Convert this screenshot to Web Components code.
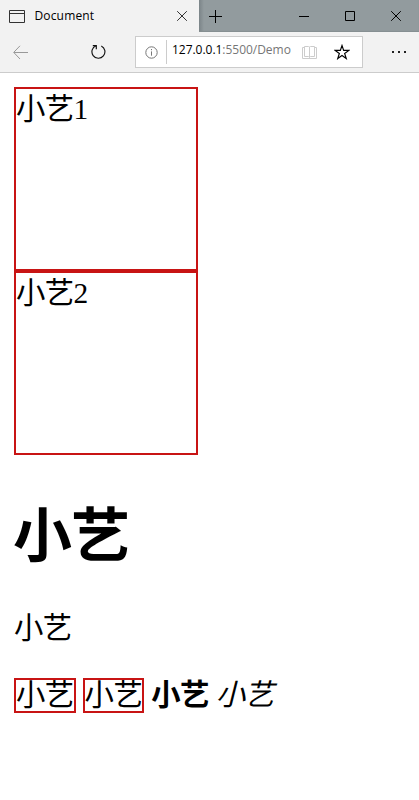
<!DOCTYPE html>
<html lang="zh">
<head>
<meta charset="utf-8">
<title>Document</title>
<style>
html,body{margin:0;background:#fff;height:100%;overflow:hidden}
</style>
</head>
<body>
<browser-window>
  <tab-strip slot="chrome">Document</tab-strip>
  <nav-bar slot="chrome"><span slot="host">127.0.0.1</span><span slot="path">:5500/Demo</span></nav-bar>
  <demo-page></demo-page>
</browser-window>
<script>
const define = (name, html) => customElements.define(name, class extends HTMLElement {
  constructor() {
    super();
    this.attachShadow({mode: 'open'}).innerHTML = html;
  }
});

define('browser-window', `
<style>:host{display:flex;flex-direction:column;width:419px;height:800px;background:#fff;overflow:hidden}</style>
<slot name="chrome"></slot><slot></slot>`);

define('tab-strip', `
<style>
:host{display:flex;height:32px;background:#929b9e;font:12px/16px "Open Sans","Noto Sans",sans-serif;color:#000}
.tab{display:flex;align-items:center;box-sizing:border-box;width:199px;padding:0 12px 0 9px;background:#f2f2f2}
.title{flex:1;padding-left:9.500px;letter-spacing:.15px}
.rest{flex:1;display:flex;align-items:center;padding:0 18px 0 10px;background:linear-gradient(90deg,#7b8488,#929b9e 5px);box-shadow:inset 0 -1px 1px #858e91}
.wide{flex:1}
.controls{display:flex;gap:36px}
svg{display:block;fill:none;stroke:#000;stroke-width:1}
</style>
<div class="tab">
  <svg width="16" height="14" viewBox="0 0 16 14" style="stroke:#333"><path d="M.5 1.5h15v12H.5zM.5 4.5h15"/></svg>
  <span class="title"><slot></slot></span>
  <svg width="10" height="10" viewBox="0 0 10 10" style="stroke:#333"><path d="M.2.2l9.6 9.6M9.8.2L.2 9.8"/></svg>
</div>
<div class="rest">
  <svg width="13" height="13" viewBox="0 0 13 13"><path d="M6.5 0v13M0 6.5h13"/></svg>
  <span class="wide"></span>
  <div class="controls">
    <svg width="10" height="10" viewBox="0 0 10 10"><path d="M0 5.5h10"/></svg>
    <svg width="10" height="10" viewBox="0 0 10 10"><path d="M.5.5h9v9h-9z"/></svg>
    <svg width="10" height="10" viewBox="0 0 10 10"><path d="M.2.2l9.6 9.6M9.8.2L.2 9.8"/></svg>
  </div>
</div>`);

define('nav-bar', `
<style>
:host{display:flex;align-items:center;box-sizing:border-box;height:41px;padding:0 12px 0 13px;background:#f2f2f2;border-bottom:1px solid #ccc;font:12px/16px "Open Sans","Noto Sans",sans-serif}
svg{display:block;fill:none;flex:none}
.reload{margin-left:63px}
.address{display:flex;align-items:center;box-sizing:border-box;width:228px;height:32px;margin-left:28px;border:1px solid #ccc;background:#fff;padding:0 12px 0 9px}
.line{width:1px;height:24px;background:#ccc;margin:0 5px 0 8px}
.url{flex:1;display:flex;white-space:nowrap;color:#000;margin-top:-4px;letter-spacing:-.03px}
.path{color:#767676}
.star{margin-left:17px}
.more{margin-left:auto}
</style>
<svg width="15" height="14" viewBox="0 0 15 14" stroke="#999"><path d="M15 7.5H1M7 .8L.7 7.4L7 14"/></svg>
<svg class="reload" width="16" height="16" viewBox="0 0 16 16" stroke="#111" stroke-width="1.15"><path d="M10.3 1.9A6.5 6.5 0 1 1 5 1.700"/><path d="M1.8 1.600h3.500v3.700"/></svg>
<div class="address">
  <svg width="13" height="14" viewBox="0 0 13 14" stroke="#777"><circle cx="6.5" cy="7.5" r="5.7"/><path d="M6.5 6.4v4.3M6.5 4v1.2"/></svg>
  <span class="line"></span>
  <div class="url"><slot name="host"></slot><span class="path"><slot name="path"></slot></span></div>
  <svg width="15" height="15" viewBox="0 0 15 15" stroke="#ccc"><path d="M7.500 1.500v11M2.500 1.500h4l1 1 1-1h4v10h-4l-1 1-1-1h-4zM2.500 2.500h-2v11h14v-11h-2"/></svg>
  <svg class="star" width="16" height="16" viewBox="0 0 16 16" stroke="#000" stroke-width="1.15"><path d="M8 1.500l1.650 4.900h5.200l-4.200 3.100 1.600 5L8 11.500l-4.250 3 1.600-5-4.200-3.100h5.200z"/></svg>
</div>
<svg class="more" width="15" height="2" viewBox="0 0 15 2"><path fill="#222" d="M0 0h2v2H0zM6 0h2v2H6zM12 0h2v2h-2z"/></svg>`);

define('red-block', `
<style>:host{display:block;box-sizing:border-box;width:184px;height:184px;border:2px solid #c81414;line-height:41px}</style><slot></slot>`);

define('red-label', `
<style>:host{display:block;box-sizing:border-box;height:35px;border:2px solid #c81414;line-height:31px}</style><slot></slot>`);

define('demo-page', `
<style>
:host{display:block;padding:14px 14px 0;color:#000;font:29.400px/38px "Liberation Serif","Noto Sans CJK SC",sans-serif;letter-spacing:-.6px}
h1{margin:42px 0 0 -1px;font-size:59px;line-height:80px;font-weight:bold;letter-spacing:-1px}
p{margin:32px 0 0;line-height:38px}
.row{display:flex;align-items:center;height:35px;margin-top:31px;gap:7px;line-height:31px}
</style>
<red-block>小艺1</red-block>
<red-block>小艺2</red-block>
<h1>小艺</h1>
<p>小艺</p>
<div class="row"><red-label>小艺</red-label><red-label>小艺</red-label><b>小艺</b><i>小艺</i></div>`);
</script>
</body>
</html>
